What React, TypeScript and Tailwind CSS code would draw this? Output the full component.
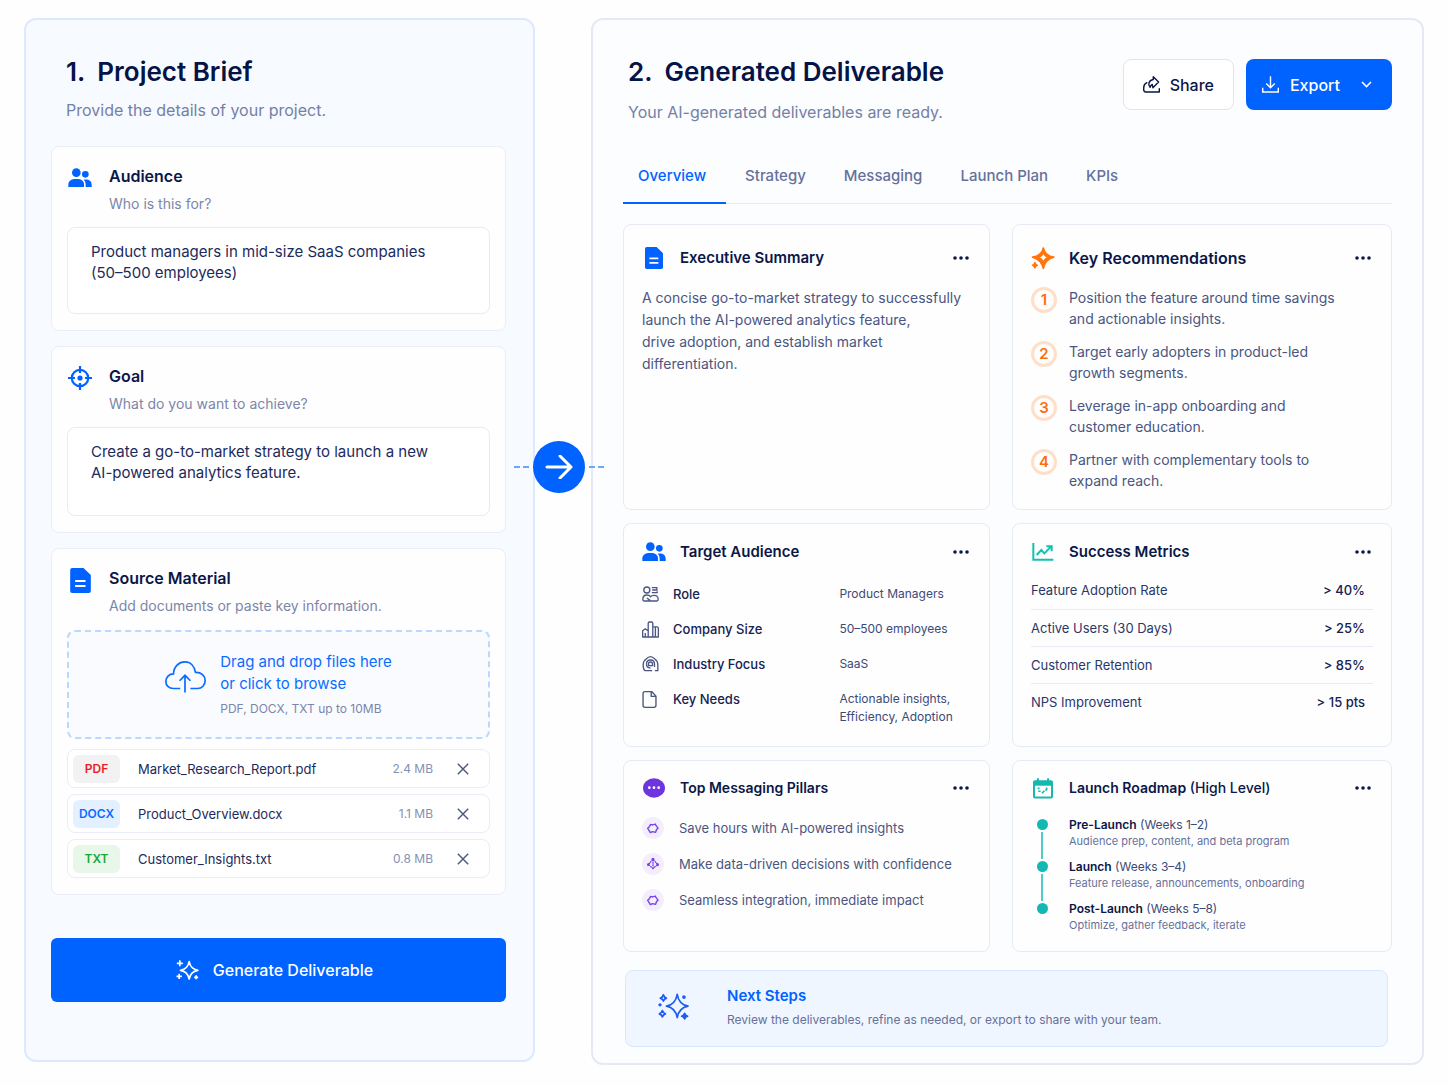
import React from "react";
import type { ReactNode } from "react";

/* ---------- Icons ---------- */

function UsersIcon() {
  return (
    <svg width="24" height="20" viewBox="0 0 72 60" fill="currentColor" aria-hidden="true">
      <circle cx="25" cy="14" r="13" />
      <circle cx="52" cy="19" r="10" />
      <path d="M1 57v-7c0-11 8-17 24-17s23 6 23 17v7z" />
      <path d="M53 57v-7c0-7-2-12-6-15 15-2 24 4 24 15v7z" />
    </svg>
  );
}

function TargetIcon() {
  return (
    <svg width="24" height="24" viewBox="0 0 24 24" fill="none" stroke="currentColor" strokeWidth="2.200" aria-hidden="true">
      <circle cx="12" cy="12" r="8.2" />
      <circle cx="12" cy="12" r="2.6" fill="currentColor" stroke="none" />
      <path d="M12 0v7M12 17v7M0 12h7M17 12h7" />
    </svg>
  );
}

function FileIcon({ className }: { className?: string }) {
  return (
    <svg className={className} viewBox="0 0 62 75" aria-hidden="true">
      <path d="M6 0h34l22 21v48a6 6 0 0 1-6 6H6a6 6 0 0 1-6-6V6a6 6 0 0 1 6-6z" fill="#0062ff" />
      <path d="M15 39h31M15 54h31" stroke="#fff" strokeWidth="6" />
    </svg>
  );
}

function CloudIcon() {
  return (
    <svg width="41" height="32" viewBox="0 0 121 94" fill="none" stroke="currentColor" strokeWidth="5" aria-hidden="true">
      <path d="M45 81H25C11 81 2.5 71 2.5 60 2.5 47 12 38 25 38 26 16 41 2.5 59 2.5c16 0 28 12 31 31 17-1 28.500 10 28.500 24C118.500 71 109 81 96 81H75" />
      <path d="M59 93V43M43 58l16-16 16 16" />
    </svg>
  );
}

function CloseIcon() {
  return (
    <svg width="12" height="12" viewBox="0 0 12 12" fill="none" stroke="currentColor" strokeWidth="1.4" aria-hidden="true">
      <path d="M.8.8l10.400 10.400M11.200.8L.8 11.200" />
    </svg>
  );
}

function SparklesIcon() {
  return (
    <svg width="23" height="20" viewBox="0 0 68 60" fill="none" stroke="currentColor" strokeWidth="5" strokeLinejoin="round" aria-hidden="true">
      <path d="M39 5q4 22 26 26-22 4-26 26-4-22-26-26 22-4 26-26z" />
      <path d="M11 1v18M2 10h18M9 41v16M1 49h16M60 46v12M54 52h12" />
    </svg>
  );
}

function StarsIcon() {
  return (
    <svg width="31" height="27" viewBox="0 0 92 80" fill="none" stroke="#1d5cf5" strokeWidth="5" strokeLinejoin="round" aria-hidden="true">
      <path d="M57 4q5 30 32 35-27 5-32 34-5-29-32-34 27-5 32-35z" />
      <path d="M16 5q2 8 9 10-7 2-9 9-2-7-9-9 7-2 9-10zM13 52q2 8 9 10-7 2-9 9-2-7-9-9 7-2 9-10z" />
      <path d="M79 60q2 7 9 9-7 2-9 8-2-6-9-8 7-2 9-9z" fill="#1d5cf5" />
      <circle cx="77" cy="12" r="3" fill="#1d5cf5" />
      <circle cx="6" cy="35" r="2.500" fill="#1d5cf5" />
    </svg>
  );
}

function OrangeSparkIcon() {
  return (
    <svg width="24" height="23" viewBox="0 0 70 68" fill="#ff760d" stroke="#ff760d" strokeWidth="5" strokeLinejoin="round" aria-hidden="true">
      <path d="M36 3q5 24 31 27-25 6-31 33-6-26-32-33 27-3 32-27z" />
      <path d="M36 21q2 8 10 10-8 3-10 10-2-7-10-10 8-2 10-10z" fill="#fff" stroke="none" />
      <path d="M11 45q2 7 8 9-6 2-8 9-2-7-8-9 6-2 8-9z" strokeWidth="3" />
    </svg>
  );
}

function ShareIcon() {
  return (
    <svg width="17" height="17" viewBox="0 0 48 48" fill="none" stroke="currentColor" strokeWidth="4" strokeLinejoin="round" strokeLinecap="round" aria-hidden="true">
      <path d="M11 19C5 22 2 27 2 33v6c0 4 2 6 6 6h38v-9" />
      <path d="M29 2l15 15-16 16-2-9c-3 1-5 4-6 8-7-8-4-20 9-22z" />
    </svg>
  );
}

function DownloadIcon() {
  return (
    <svg width="17" height="17" viewBox="0 0 48 48" fill="none" stroke="currentColor" strokeWidth="4" aria-hidden="true">
      <path d="M24 1v32M12 21l12 12 12-12M2 33v12h44V33" />
    </svg>
  );
}

function ChevronIcon() {
  return (
    <svg width="11" height="7" viewBox="0 0 11 7" fill="none" stroke="currentColor" strokeWidth="1.6" aria-hidden="true">
      <path d="M1 1l4.500 4.500L10 1" />
    </svg>
  );
}

function MoreIcon() {
  return (
    <svg width="16" height="4" viewBox="0 0 16 4" fill="currentColor" aria-hidden="true">
      <circle cx="2" cy="2" r="1.800" />
      <circle cx="8" cy="2" r="1.800" />
      <circle cx="14" cy="2" r="1.800" />
    </svg>
  );
}

function ChartIcon() {
  return (
    <svg width="22" height="18" viewBox="0 0 64 54" fill="none" stroke="#14bfb2" strokeWidth="6" aria-hidden="true">
      <path d="M3 0v50h60" />
      <path d="M13 36l14-15 9 10 20-20M42 10h16v15" />
    </svg>
  );
}

function ChatIcon() {
  return (
    <svg width="22" height="20" viewBox="0 0 66 60" aria-hidden="true">
      <ellipse cx="33" cy="30" rx="33" ry="29" fill="#6d35e0" />
      <g fill="#fff">
        <circle cx="19" cy="29" r="4" />
        <circle cx="33" cy="29" r="4" />
        <circle cx="47" cy="29" r="4" />
      </g>
    </svg>
  );
}

function CalendarIcon() {
  return (
    <svg width="20" height="21" viewBox="0 0 61 63" aria-hidden="true">
      <path d="M12 0h6v6h25V0h6v6h6a6 6 0 0 1 6 6v44a6 6 0 0 1-6 6H6a6 6 0 0 1-6-6V12a6 6 0 0 1 6-6h6z" fill="#14b8ae" />
      <path d="M6 23h49v33H6z" fill="#fff" />
      <path d="M14 31h6M16 40h7M27 46l8-7M39 31h5M38 38l5-5" stroke="#14b8ae" strokeWidth="5" />
    </svg>
  );
}

function RoleIcon() {
  return (
    <svg width="17" height="16" viewBox="0 0 50 48" fill="none" stroke="currentColor" strokeWidth="4" aria-hidden="true">
      <circle cx="14" cy="12" r="9" />
      <path d="M29 5h15v7H30M29 20h16v-4M2 40c0-9 4-13 12-13s9 2 11 5c2-3 4-4 11-4 9 0 12 4 12 12 0 3-1 5-4 5H6c-3 0-4-2-4-5zM14 36l10 7" />
    </svg>
  );
}

function BarsIcon() {
  return (
    <svg width="17" height="17" viewBox="0 0 52 50" fill="none" stroke="currentColor" strokeWidth="4" strokeLinejoin="round" aria-hidden="true">
      <path d="M2 48V29l8-6 9 6v19zM19 48V6c0-3 2-4 4-4h6c3 0 4 1 4 4v42zM33 17h13c3 0 4 1 4 4v27H2M41 18v30M10 48V36" />
    </svg>
  );
}

function HouseIcon() {
  return (
    <svg width="17" height="16" viewBox="0 0 50 48" fill="none" stroke="currentColor" strokeWidth="4" strokeLinejoin="round" aria-hidden="true">
      <path d="M8 44C3 40 3 34 3 27c0-8 3-14 9-18 4-4 8-7 13-7s9 3 13 7c6 4 9 10 9 18v17h-9" />
      <path d="M37 33V24c0-7-5-12-12-12s-12 5-12 12 5 12 12 12M8 44h22" />
      <path d="M19 29v-5c0-4 3-6 6-6s6 2 6 6v5z" />
    </svg>
  );
}

function PageIcon() {
  return (
    <svg width="15" height="17" viewBox="0 0 42 50" fill="none" stroke="currentColor" strokeWidth="4" strokeLinejoin="round" aria-hidden="true">
      <path d="M8 2h20l12 13v27c0 4-2 6-6 6H8c-4 0-6-2-6-6V8c0-4 2-6 6-6zM26 3v13h13" />
    </svg>
  );
}

function BubbleIcon() {
  return (
    <svg width="12" height="11" viewBox="0 0 36 33" fill="none" stroke="#7440e6" strokeWidth="4" strokeLinejoin="round" aria-hidden="true">
      <path d="M11 4l6 2 7-3 5 7 4 5-5 6-2 7-9-2-7 3-4-7-4-6 5-5z" />
    </svg>
  );
}

function NodesIcon() {
  return (
    <svg width="12" height="12" viewBox="0 0 36 36" fill="none" stroke="#7440e6" strokeWidth="4" aria-hidden="true">
      <path d="M18 3v30M18 4L9 14M18 4l9 10M9 15L3 20l9 6 6 6 6-6 9-6-6-6" strokeDasharray="6 2" />
      <circle cx="18" cy="4" r="2.500" fill="#7440e6" />
      <circle cx="4" cy="20" r="2" fill="#7440e6" />
      <circle cx="32" cy="20" r="2" fill="#7440e6" />
    </svg>
  );
}

/* ---------- Left panel ---------- */

const files = [
  { type: "PDF", name: "Market_Research_Report.pdf", size: "2.4 MB", badge: "bg-[#f2f2f3] text-[#ec1c24]" },
  { type: "DOCX", name: "Product_Overview.docx", size: "1.1 MB", badge: "bg-[#e3f0ff] text-[#0a6cff]" },
  { type: "TXT", name: "Customer_Insights.txt", size: "0.8 MB", badge: "bg-[#e8f7ea] text-[#16a834]" },
];

type BriefCardProps = { icon: ReactNode; title: string; hint: string; id: string; children: ReactNode };

function BriefCard({ icon, title, hint, id, children }: BriefCardProps) {
  return (
    <div className="rounded-lg border border-[#e9eef8] bg-[#fefeff] px-[15px] pt-[17px] pb-4">
      <div className="flex items-start gap-4">
        <span className="flex h-7 w-[26px] items-center justify-center text-[#0062ff]">{icon}</span>
        <div>
          <label htmlFor={id} className="block text-base leading-6 font-semibold text-[#0a1748]">
            {title}
          </label>
          <p className="mt-[6px] text-sm leading-5 text-[#7c86a8]">{hint}</p>
        </div>
      </div>
      {children}
    </div>
  );
}

function BriefPanel() {
  return (
    <section className="rounded-xl border-2 border-[#dde9fd] bg-[#f7fbff] pt-[34px] pr-[27px] pb-[58px] pl-[25px]">
      <header className="pl-[15px]">
        <h1 className="flex gap-3 text-[26px] leading-9 font-semibold text-[#051347]">
          <span>1.</span>
          <span>Project Brief</span>
        </h1>
        <p className="mt-2 text-base leading-6 text-[#7580a5]">Provide the details of your project.</p>
      </header>

      <div className="mt-6 flex flex-col gap-[15px]">
        <BriefCard id="audience" icon={<UsersIcon />} title="Audience" hint="Who is this for?">
          <textarea
            id="audience"
            className="mt-[13px] block h-[87px] w-full resize-none rounded-lg border border-[#e8ebf5] bg-white pt-[13px] pr-10 pl-[23px] text-[15px] leading-[21px] text-[#1c2a5c] outline-none"
            defaultValue="Product managers in mid-size SaaS companies (50–500 employees)"
          />
        </BriefCard>
        <BriefCard id="goal" icon={<TargetIcon />} title="Goal" hint="What do you want to achieve?">
          <textarea
            id="goal"
            className="mt-[13px] block h-[89px] w-full resize-none rounded-lg border border-[#e8ebf5] bg-white pt-[13px] pr-10 pl-[23px] text-[15px] leading-[21px] text-[#1c2a5c] outline-none"
            defaultValue="Create a go-to-market strategy to launch a new AI-powered analytics feature."
          />
        </BriefCard>
        <BriefCard
          id="source"
          icon={<FileIcon className="h-[25px] w-[21px]" />}
          title="Source Material"
          hint="Add documents or paste key information."
        >
          <label
            htmlFor="source"
            className="mt-[14px] flex h-[109px] cursor-pointer items-center justify-center gap-[14px] rounded-lg border-2 border-dashed border-[#bcd8fd] bg-[#f9fbff]"
          >
            <span className="mb-4 text-[#0a6cff]">
              <CloudIcon />
            </span>
            <span className="flex flex-col">
              <span className="text-[15px] leading-[22px] text-[#0a6cff]">Drag and drop files here</span>
              <span className="text-[15px] leading-[22px] text-[#0a6cff]">or click to browse</span>
              <span className="mt-1 text-xs leading-5 text-[#7c86a8]">PDF, DOCX, TXT up to 10MB</span>
            </span>
          </label>
          <input id="source" type="file" multiple className="sr-only" />
          <ul className="mt-[10px] flex flex-col gap-[6px]">
            {files.map((file) => (
              <li key={file.name} className="flex h-[39px] items-center rounded-lg border border-[#eaedf7] bg-white pr-5 pl-[5px]">
                <span className={`flex h-7 w-[47px] items-center justify-center rounded-md text-xs font-semibold ${file.badge}`}>
                  {file.type}
                </span>
                <span className="ml-[18px] flex-1 text-[13px] leading-5 text-[#1c2a5c]">{file.name}</span>
                <span className="text-xs leading-5 text-[#8690b0]">{file.size}</span>
                <button type="button" aria-label={`Remove ${file.name}`} className="ml-6 text-[#4a5680]">
                  <CloseIcon />
                </button>
              </li>
            ))}
          </ul>
        </BriefCard>
      </div>

      <button
        type="button"
        className="mt-[43px] flex h-16 w-full items-center justify-center gap-[14px] rounded-md bg-[#0062ff] pr-2 text-base font-medium text-white"
      >
        <SparklesIcon />
        Generate Deliverable
      </button>
    </section>
  );
}

/* ---------- Right panel ---------- */

const tabs = ["Overview", "Strategy", "Messaging", "Launch Plan", "KPIs"];

const recommendations = [
  "Position the feature around time savings and actionable insights.",
  "Target early adopters in product-led growth segments.",
  "Leverage in-app onboarding and customer education.",
  "Partner with complementary tools to expand reach.",
];

const audience = [
  { icon: <RoleIcon />, label: "Role", value: "Product Managers" },
  { icon: <BarsIcon />, label: "Company Size", value: "50–500 employees" },
  { icon: <HouseIcon />, label: "Industry Focus", value: "SaaS" },
  { icon: <PageIcon />, label: "Key Needs", value: "Actionable insights, Efficiency, Adoption" },
];

const metrics = [
  { label: "Feature Adoption Rate", value: "> 40%" },
  { label: "Active Users (30 Days)", value: "> 25%" },
  { label: "Customer Retention", value: "> 85%" },
  { label: "NPS Improvement", value: "> 15 pts" },
];

const pillars = [
  { icon: <BubbleIcon />, text: "Save hours with AI-powered insights" },
  { icon: <NodesIcon />, text: "Make data-driven decisions with confidence" },
  { icon: <BubbleIcon />, text: "Seamless integration, immediate impact" },
];

const roadmap = [
  { phase: "Pre-Launch", weeks: "(Weeks 1–2)", text: "Audience prep, content, and beta program" },
  { phase: "Launch", weeks: "(Weeks 3–4)", text: "Feature release, announcements, onboarding" },
  { phase: "Post-Launch", weeks: "(Weeks 5–8)", text: "Optimize, gather feedback, iterate" },
];

type CardProps = {
  icon: ReactNode;
  title: string;
  note?: string;
  className?: string;
  titleSize?: string;
  children: ReactNode;
};

function Card({ icon, title, note, className = "", titleSize = "text-[15px]", children }: CardProps) {
  return (
    <article className={`rounded-lg border border-[#e7eaf5] bg-[#fefeff] px-[18px] ${className}`}>
      <div className="flex h-6 items-center">
        <span className="flex w-6 items-center justify-center text-[#0062ff]">{icon}</span>
        <h2 className={`ml-[14px] flex-1 leading-6 font-semibold text-[#0a1748] ${titleSize}`}>
          {title}
          {note && <span className="font-medium"> {note}</span>}
        </h2>
        <button type="button" aria-label={`${title} options`} className="mr-[2px] text-[#0a1748]">
          <MoreIcon />
        </button>
      </div>
      {children}
    </article>
  );
}

function DeliverablePanel() {
  return (
    <section className="rounded-xl border-2 border-[#e6e9f4] bg-[#fcfdff] px-[30px] pt-[34px] pb-4">
      <header className="flex items-start justify-between">
        <div className="pl-[5px]">
          <h1 className="flex gap-3 text-[26px] leading-9 font-semibold text-[#051347]">
            <span>2.</span>
            <span>Generated Deliverable</span>
          </h1>
          <p className="mt-[10px] text-base leading-6 text-[#7580a5]">Your AI-generated deliverables are ready.</p>
        </div>
        <div className="mt-[5px] flex gap-3">
          <button
            type="button"
            className="flex h-[51px] items-center gap-[10px] rounded-lg border border-[#e0e4f1] bg-white px-[19px] text-base font-medium text-[#0a1748]"
          >
            <ShareIcon />
            Share
          </button>
          <button
            type="button"
            className="flex h-[51px] items-center gap-[11px] rounded-lg bg-[#0062ff] pr-5 pl-4 text-base font-medium text-white"
          >
            <DownloadIcon />
            Export
            <span className="ml-[10px]">
              <ChevronIcon />
            </span>
          </button>
        </div>
      </header>

      <nav className="mt-10 flex border-b border-[#e8ebf5]">
        {tabs.map((tab, i) => (
          <a
            key={tab}
            href="#"
            className={
              i === 0
                ? "-mb-px border-b-2 border-[#0062ff] pr-5 pb-[14px] pl-[15px] text-[15px] leading-6 font-medium text-[#0062ff]"
                : "px-[19px] pb-[14px] text-[15px] leading-6 font-medium text-[#66719a]"
            }
          >
            {tab}
          </a>
        ))}
      </nav>

      <div className="mt-5 grid grid-cols-[367fr_380fr] gap-x-[22px] gap-y-[13px]">
        <Card icon={<FileIcon className="h-[22px] w-[18px]" />} title="Executive Summary" className="pt-[21px] pb-[18px]">
          <p className="mt-[17px] max-w-[325px] text-sm leading-[22px] text-[#4a5680]">
            A concise go-to-market strategy to successfully launch the AI-powered analytics feature,
            <br />
            drive adoption, and establish market differentiation.
          </p>
        </Card>

        <Card icon={<OrangeSparkIcon />} title="Key Recommendations" titleSize="text-base" className="pt-[21px] pb-[18px]">
          <ol className="mt-[17px] flex flex-col gap-3">
            {recommendations.map((text, i) => (
              <li key={text} className="flex items-start gap-3">
                <span className="flex size-[26px] shrink-0 items-center justify-center rounded-full border-[3px] border-[#ffdfc8] text-[15px] font-semibold text-[#ff6d0d]">
                  {i + 1}
                </span>
                <p className="max-w-[275px] text-sm leading-[21px] text-[#4a5680]">{text}</p>
              </li>
            ))}
          </ol>
        </Card>

        <Card icon={<UsersIcon />} title="Target Audience" className="pt-4 pb-5">
          <dl className="mt-[21px] flex flex-col gap-[17px]">
            {audience.map((row) => (
              <div key={row.label} className="grid grid-cols-[3fr_2fr]">
                <dt className="flex h-[18px] items-center text-[13px] leading-[18px] font-medium text-[#16234f]">
                  <span className="flex w-[31px] text-[#4a5680]">{row.icon}</span>
                  {row.label}
                </dt>
                <dd className="text-xs leading-[18px] text-[#3d4a76]">{row.value}</dd>
              </div>
            ))}
          </dl>
        </Card>

        <Card icon={<ChartIcon />} title="Success Metrics" className="pt-4 pb-6">
          <table className="mt-2 w-full">
            <tbody>
              {metrics.map((row) => (
                <tr key={row.label} className="h-[37px] border-b border-[#e8ebf5] last:border-b-0">
                  <th scope="row" className="text-left text-[13px] leading-5 font-normal text-[#2a376a]">
                    {row.label}
                  </th>
                  <td className="pr-2 text-right text-[13px] leading-5 font-medium text-[#16234f]">{row.value}</td>
                </tr>
              ))}
            </tbody>
          </table>
        </Card>

        <Card icon={<ChatIcon />} title="Top Messaging Pillars" titleSize="text-sm" className="pt-[15px] pb-5">
          <ul className="mt-[17px] flex flex-col gap-[14px]">
            {pillars.map((row) => (
              <li key={row.text} className="flex items-center gap-[15px]">
                <span className="flex size-[22px] items-center justify-center rounded-full bg-[#f3edfe]">{row.icon}</span>
                <span className="text-[13px] leading-5 text-[#4a5680]">{row.text}</span>
              </li>
            ))}
          </ul>
        </Card>

        <Card icon={<CalendarIcon />} title="Launch Roadmap" note="(High Level)" titleSize="text-sm" className="pt-[15px] pb-[17px]">
          <ol className="mt-4">
            {roadmap.map((step, i) => (
              <li key={step.phase} className="flex gap-[22px]">
                <span className="flex w-4 flex-col items-center gap-[2px] pt-[3px] pl-[6px]">
                  <span className="size-[11px] shrink-0 rounded-full bg-[#14b8b2]" />
                  {i < roadmap.length - 1 && <span className="-mb-px w-[2px] flex-1 bg-[#4fccc6]" />}
                </span>
                <div className={i < roadmap.length - 1 ? "pb-2" : ""}>
                  <p className="text-xs leading-[17px] text-[#3d4a76]">
                    <strong className="font-semibold text-[#0a1748]">{step.phase}</strong> {step.weeks}
                  </p>
                  <p className="text-[11px] leading-[17px] text-[#66719a]">{step.text}</p>
                </div>
              </li>
            ))}
          </ol>
        </Card>
      </div>

      <aside className="mt-[18px] mr-1 ml-[2px] flex h-[77px] items-center rounded-lg border border-[#d9e7fd] bg-[#f0f6ff] pb-1 pl-8">
        <StarsIcon />
        <div className="ml-[38px]">
          <h2 className="text-[15px] leading-6 font-semibold text-[#0062ff]">Next Steps</h2>
          <p className="mt-[2px] text-xs leading-5 text-[#66719a]">
            Review the deliverables, refine as needed, or export to share with your team.
          </p>
        </div>
      </aside>
    </section>
  );
}

/* Arrow that links both panels, drawn over the gutter */
function Connector() {
  return (
    <div className="absolute top-[423px] left-6 flex -translate-x-1/2 items-center gap-1">
      <span className="flex gap-[3px]">
        <span className="h-[2px] w-[6px] bg-[#6ba9f8]" />
        <span className="h-[2px] w-[6px] bg-[#6ba9f8]" />
      </span>
      <span className="flex size-[52px] items-center justify-center rounded-full bg-[#0062ff]">
        <svg width="28" height="24" viewBox="0 0 28 24" fill="none" stroke="#fff" strokeWidth="3" strokeLinecap="round" strokeLinejoin="round" aria-hidden="true">
          <path d="M2 12h24M15 1l11 11-11 11" />
        </svg>
      </span>
      <span className="flex gap-[3px]">
        <span className="h-[2px] w-[6px] bg-[#6ba9f8]" />
        <span className="h-[2px] w-[6px] bg-[#6ba9f8]" />
      </span>
    </div>
  );
}

export default function App() {
  return (
    <main className="grid min-h-screen grid-cols-[511fr_56px_833fr] items-start bg-[#fefefe] px-6 pt-[18px] pb-5 font-['Inter','Liberation_Sans',sans-serif]">
      <BriefPanel />
      <div className="relative">
        <Connector />
      </div>
      <DeliverablePanel />
    </main>
  );
}
